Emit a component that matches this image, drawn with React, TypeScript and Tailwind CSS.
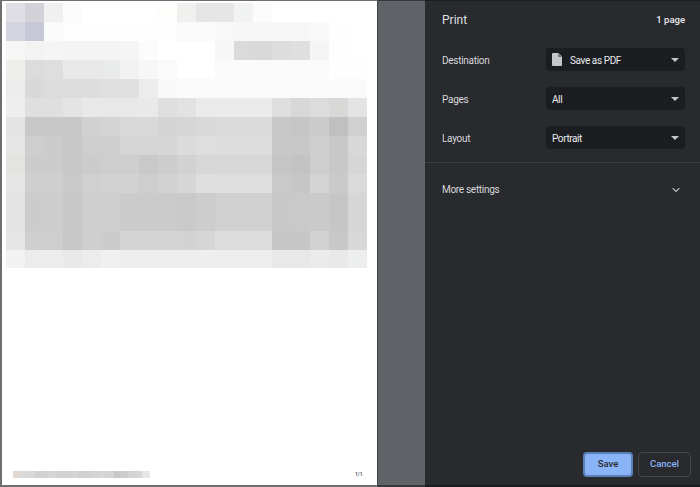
import { ChevronDown } from "lucide-react";

const R = [
  "dedee4 d2d2d8 f0f0f0 fcfcfc ffffff ffffff ffffff ffffff fdfdfb f0f0ee e6e6e6 e6e6e6 f1f3f2 fcfcfc ffffff ffffff ffffff ffffff ffffff",
  "d4d4de c6c8d6 fafafa fdfdfd fefefe fefefe fefefe fefefe fdfdfd fafafa fafafa f8f8f8 f7f7f7 f7f7f7 f7f7f7 f7f7f7 f9f9f9 fefefe ffffff",
  "f6f6f6 f3f3f3 f5f5f5 f4f4f4 f4f4f4 f4f4f4 f5f5f5 fcfcfc ffffff ffffff ffffff f7f7f7 dadada d9d9d9 dddddd dfdfdf f5f5f5 fefefe ffffff",
  "eeeeea dcdcdc dedede e9e9e9 e9e9e9 e9ebeb f2f2f2 f7f7f7 fafafa ffffff ffffff fbfbfb fbfbfb fafafa fafafa fafafa fafafa fefefe fefefe",
  "ececec d8d8d8 dcdcdc dddddd dddddd e0e0e0 e0e0e0 ececec f8f8f8 fafafa fafafa fafafa fafafa fafafa fafafa fafafa fafafa fafafa fafafa",
  "eeeeee dfdfdf dfdfdf e4e4e4 e8e8e8 e8e8e8 e8e8e8 e9e9e9 dedede e2e2e2 ebebeb ebebeb ebebeb ebebeb dedede d8d8d8 dcdcdc d8d8d6 e4e4e4",
  "e4e4e4 c8c8c8 c8c8c8 c8c8c8 d1d1d1 d4d4d4 d9d9d9 d9d9d9 d4d4d4 d6d6d6 d9d9d9 dbdbdb dbdbdb dadada c8c8c8 c6c6c6 cccccc c0c0c0 d0d0d0",
  "e6e6e6 cecece cccccc c8c8c8 cecece cecece d5d5d5 d5d5d5 d6d6d6 dbdbdb dedede dddddd dddddd dddddd c8c8c8 c8c8c8 cecece c8c8c8 d8d8d8",
  "e3e3e0 cccccc cccccc c8c8c8 cccccc cecece cecece c9c9c9 cdcdcd d2d2d2 d7d7d7 d8d8d8 d8d8d8 d8d8d8 c6c6c6 c3c3c3 cecece c8c8c8 d6d6d6",
  "e6e6e6 cfcfcf cfcfcf cacaca d0d0d0 d2d2d2 d2d2d2 cecece d2d2d2 d6d6d6 dedede dedede dedede dedede c9c9c9 c6c6c6 d4d4d4 cacaca dadada",
  "e4e4e4 cccccc cdcdcd c8c8c8 cfcfcf cfcfcf cccccc cbcbcb cbcbcb c9c9c9 cdcdcd d0d0d0 d0d0d0 d0d0d0 c8c8c8 c9c9c9 cacaca c6c6c6 d6d6d6",
  "e4e4e4 cccccc cdcdcd c8c8c8 cfcfcf cfcfcf cccccc cbcbcb cbcbcb c9c9c9 cdcdcd d0d0d0 d0d0d0 d0d0d0 c8c8c8 c9c9c9 cacaca c6c6c6 d6d6d6",
  "e6e6e6 cfcfcf cecece c8c8c8 cfcfcf cccccc d4d4d4 d4d4d4 d4d4d4 d3d3d3 d6d6d6 dcdcdc dcdcdc dcdcdc c6c6c6 c6c6c6 d2d2d2 c8c8c8 d8d8d8",
  "f2f2f2 ececec ececec e9e9e9 ececec f0f0f0 eeeeee eeeeee eeeeee eeeeee eeeeee eeeeee eeeeee eeeeee e8e8e8 e8e8e8 ebebeb e9e9e9 ecefee",
].map((r) => r.split(" "));

const F = [
  "e2d8d2", "dcd8d6", "d8d8d8", "d2d2d2", "d2d2d2", "d6d6d6", "d2d2d2", "d2d2d2", "d4d4d4", "d0d0d0", "d4d0ce", "d4d4d4", "d6d6d6", "d4d4d4", "c8c8c8", "cccccc", "d2d2d2", "d6d6d6", "e6e6e6",
];

function Row({ label, value, icon }: { label: string; value: string; icon?: boolean }) {
  return (
    <div className="flex items-center h-[23px]">
      <div className="w-[104px] pt-[1px] text-[10px] tracking-[-0.28px] text-[#d6d8db]">{label}</div>
      <div className="flex items-center w-[139px] h-[23px] rounded bg-[#1c1d20] pl-[6px] pr-[6px] text-[10px] tracking-[-0.4px] text-[#e8eaed]">
        {icon && (
          <svg width="10" height="13" viewBox="0 0 10 13" className="mr-[8px] shrink-0">
            <path d="M1 0H6.5L10 3.5V12a1 1 0 0 1-1 1H1a1 1 0 0 1-1-1V1a1 1 0 0 1 1-1Z" fill="#c4c6c9" />
            <path d="M6 0V4H10" fill="#6f7276" />
          </svg>
        )}
        <span className="flex-1 pt-[1px]">{value}</span>
        <span className="w-0 h-0 border-x-[4px] border-x-transparent border-t-[4px] border-t-[#c4c6c9]" />
      </div>
    </div>
  );
}

export default function App() {
  return (
    <div className="flex w-[700px] h-[487px] overflow-hidden bg-[#292a2d] font-['Roboto','Noto_Sans',sans-serif]">
      <div className="flex flex-col w-[378px] shrink-0 bg-white border-t border-l-2 border-b-2 border-r border-[#6e6e6e] border-r-[#3f4144] pt-[2px]">
        <div className="ml-[4px] w-[361px] grid grid-cols-[repeat(19,19px)] grid-rows-[repeat(13,19px)_18px]">
          {R.flat().map((c, i) => (
            <div key={i} style={{ backgroundColor: "#" + c }} />
          ))}
        </div>
        <div className="flex items-center mt-[203px] ml-[11px]">
          <div className="grid grid-cols-[repeat(19,7.2px)] h-[7px] w-[137px]">
            {F.map((c, i) => (
              <div key={i} style={{ backgroundColor: "#" + c }} />
            ))}
          </div>
          <span className="ml-[205px] text-[5px] font-bold text-[#5f6875]">1/1</span>
        </div>
      </div>
      <div className="w-[47px] shrink-0 bg-[#5f6368] border-t border-b-2 border-[#37383b]" />
      <div className="flex flex-col flex-1 min-w-0 bg-[#292a2d] border-t border-b-2 border-[#1c1d1f]">
        <div className="flex items-center justify-between h-[38px] pl-[17px] pr-[15px]">
          <span className="text-[12px] text-[#dfe1e4]">Print</span>
          <span className="text-[9.5px] font-medium text-[#e8eaed]">1 page</span>
        </div>
        <div className="flex flex-col gap-[16px] pl-[17px] pr-[15px] pt-[9px] pb-[13px] border-b border-[#3c3d40]">
          <Row label="Destination" value="Save as PDF" icon />
          <Row label="Pages" value="All" />
          <Row label="Layout" value="Portrait" />
        </div>
        <div className="flex items-center justify-between h-[53px] pl-[17px] pr-[18px]">
          <span className="text-[10px] tracking-[-0.3px] text-[#d6d8db]">More settings</span>
          <ChevronDown size={12} strokeWidth={2.25} className="text-[#b4b6b9]" />
        </div>
        <div className="flex justify-end items-center gap-[5px] mt-auto h-[40px] pr-[9px] pb-[2px]">
          <button className="w-[50px] h-[25px] rounded bg-[#8ab4f8] border-2 border-[#5b7fb8] text-[9.5px] font-medium text-[#292a2d]">Save</button>
          <button className="w-[53px] h-[25px] rounded border border-[#44464a] text-[9.5px] font-medium text-[#8ab4f8]">Cancel</button>
        </div>
      </div>
    </div>
  );
}
